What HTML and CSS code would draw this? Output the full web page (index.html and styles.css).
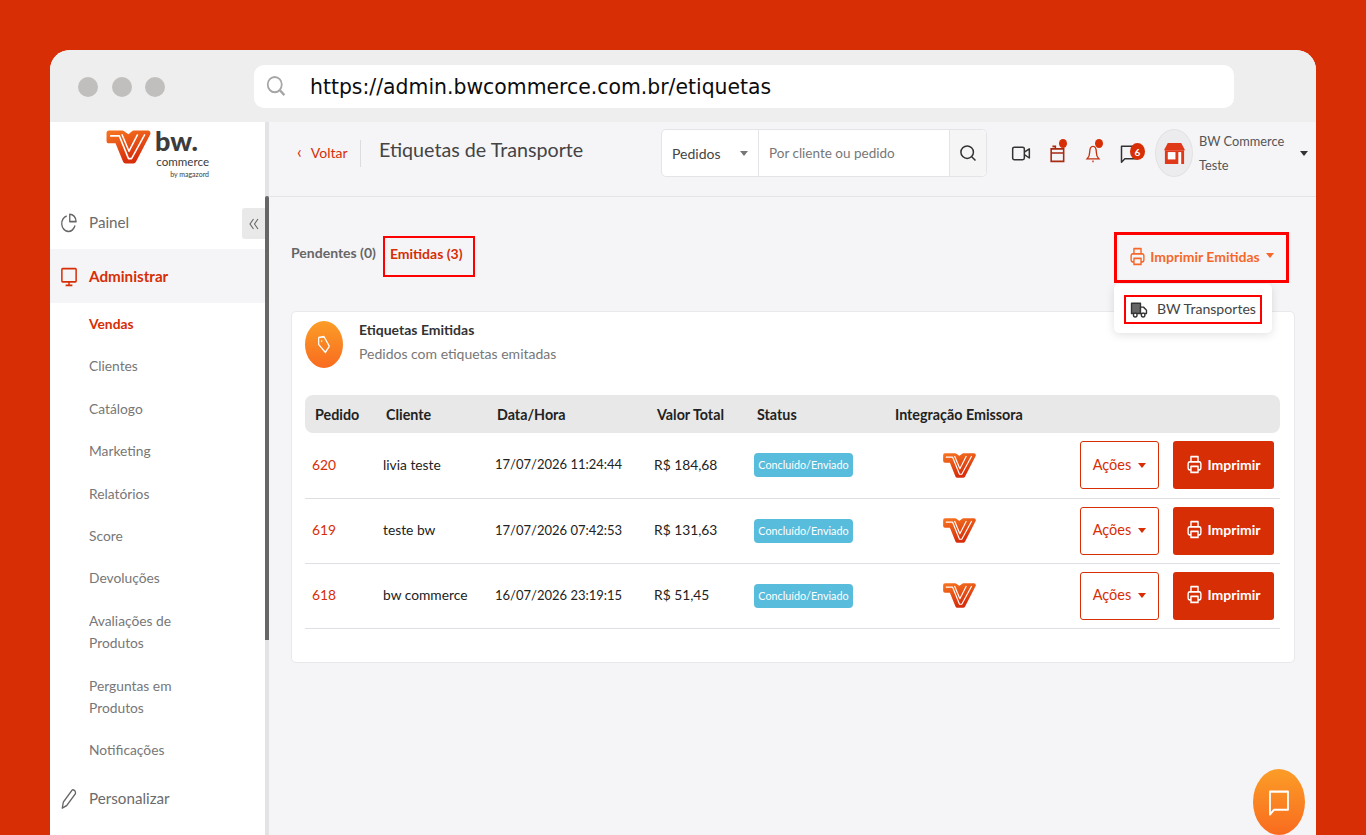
FILE: index.html
```html
<!DOCTYPE html>
<html lang="pt-BR">
<head>
<meta charset="utf-8">
<title>Etiquetas de Transporte</title>
<link rel="stylesheet" href="styles.css">
</head>
<body>
<svg class="defs" width="0" height="0">
  <defs>
    <linearGradient id="lg" x1="0" y1="0" x2="0.4" y2="1"><stop offset="0" stop-color="#f4701f"/><stop offset="1" stop-color="#d8300c"/></linearGradient>
    <symbol id="mark" viewBox="0 0 46 34" preserveAspectRatio="none">
      <path d="M4 4 H17 L23 8 L28 4 H42 L28 30 H20 L12 11 H4 Z" fill="url(#lg)" stroke="url(#lg)" stroke-width="5" stroke-linejoin="round"/>
      <path d="M5 6.5 H14 L23 28 H26 L39 5" fill="none" stroke="#fff" stroke-width="1.5" stroke-linejoin="round"/>
      <path d="M16.5 5 L23.5 21 L32 5" fill="none" stroke="#fff" stroke-width="1.5" stroke-linejoin="round"/>
    </symbol>
    <symbol id="printer" viewBox="0 0 24 24" preserveAspectRatio="none">
      <path d="M7 9V3h10v6M7 18H5a2 2 0 0 1-2-2v-5a2 2 0 0 1 2-2h14a2 2 0 0 1 2 2v5a2 2 0 0 1-2 2h-2M7 14h10v7H7z" fill="none" stroke="currentColor" stroke-width="2" stroke-linejoin="round"/>
    </symbol>
  </defs>
</svg>
<div class="window">
  <div class="chrome">
    <div class="dots"><span class="dot"></span><span class="dot"></span><span class="dot"></span></div>
    <div class="urlbar">
      <svg class="url-icon" viewBox="0 0 24 24" preserveAspectRatio="none"><circle cx="10" cy="10" r="8" fill="none" stroke="#a5a5a5" stroke-width="2"/><path d="M16 16l5 5" stroke="#a5a5a5" stroke-width="2.6"/></svg>
      <span class="url-text">https://admin.bwcommerce.com.br/etiquetas</span>
    </div>
  </div>
  <div class="app">
    <aside class="sidebar">
      <div class="logo">
        <svg class="logo-mark"><use href="#mark"/></svg>
        <div class="logo-text">
          <span class="logo-bw">bw.</span>
          <span class="logo-com">commerce</span>
          <span class="logo-by">by magazord</span>
        </div>
      </div>
      <nav class="nav">
        <div class="nav-top">
          <svg class="nav-icon" viewBox="0 0 24 24" preserveAspectRatio="none"><path d="M9 4.5a9 9 0 1 0 11 11M13 2.5a8.5 8.5 0 0 1 8.5 8.5H13z" fill="none" stroke="#666" stroke-width="1.8" stroke-linejoin="round"/></svg>
          <span>Painel</span>
          <button class="collapse" type="button" aria-label="Recolher"><svg viewBox="0 0 10 12"><path d="M4.5 1L1 6l3.5 5M9 1L5.5 6 9 11" fill="none" stroke="#666" stroke-width="1.1"/></svg></button>
        </div>
        <div class="nav-top nav-active">
          <svg class="nav-icon" viewBox="0 0 24 24" preserveAspectRatio="none"><path d="M3.5 3h17a1 1 0 0 1 1 1v13a1 1 0 0 1-1 1h-17a1 1 0 0 1-1-1V4a1 1 0 0 1 1-1zM12 18v4M7.5 22h9" fill="none" stroke="#d72e05" stroke-width="2"/></svg>
          <span>Administrar</span>
        </div>
        <a class="sub sub-active">Vendas</a>
        <a class="sub">Clientes</a>
        <a class="sub">Catálogo</a>
        <a class="sub">Marketing</a>
        <a class="sub">Relatórios</a>
        <a class="sub">Score</a>
        <a class="sub">Devoluções</a>
        <a class="sub">Avaliações de Produtos</a>
        <a class="sub">Perguntas em Produtos</a>
        <a class="sub">Notificações</a>
        <div class="nav-top nav-last">
          <svg class="nav-icon" viewBox="0 0 24 24" preserveAspectRatio="none"><path d="M3 23l1.5-7L16 2.5c1.5-1.5 5.5 1 4.5 4L9 20z" fill="none" stroke="#666" stroke-width="1.7" stroke-linejoin="round"/></svg>
          <span>Personalizar</span>
        </div>
      </nav>
      <div class="scroll-thumb"></div>
    </aside>
    <main class="main">
      <header class="topbar">
        <a class="back"><span class="back-ch">‹</span>Voltar</a>
        <h1 class="title">Etiquetas de Transporte</h1>
        <div class="search">
          <div class="search-select"><span>Pedidos</span><i class="caret caret-grey"></i></div>
          <div class="search-input">Por cliente ou pedido</div>
          <div class="search-btn"><svg viewBox="0 0 24 24"><circle cx="11" cy="11" r="7.5" fill="none" stroke="#333" stroke-width="1.8"/><path d="M16.5 16.5L21 21" stroke="#333" stroke-width="1.8"/></svg></div>
        </div>
        <div class="top-icons">
          <span class="ti"><svg viewBox="0 0 24 24"><rect x="2" y="5" width="14" height="15" rx="2" fill="none" stroke="#333" stroke-width="1.8"/><path d="M16 11l6-4v11l-6-4" fill="none" stroke="#333" stroke-width="1.8" stroke-linejoin="round"/></svg></span>
          <span class="ti"><svg viewBox="0 0 24 24"><path d="M5 7h15v15H5zM5 12h15M10 7V3M10 4H6.5" fill="none" stroke="#a82a10" stroke-width="1.9"/></svg><i class="ping ping-cal"></i></span>
          <span class="ti"><svg viewBox="0 0 24 24"><path d="M12 4c-3 0-4 3-4 7 0 3-1 6-3 8h14c-2-2-3-5-3-8 0-4-1-7-4-7zM12 21v2" fill="none" stroke="#c3300e" stroke-width="1.6"/></svg><i class="ping ping-bell"></i></span>
          <span class="ti"><svg viewBox="0 0 24 24"><path d="M3 4h18v15H7l-4 4z" fill="none" stroke="#333" stroke-width="1.8" stroke-linejoin="round"/></svg><i class="badge">6</i></span>
        </div>
        <div class="avatar"><svg viewBox="0 0 24 24" preserveAspectRatio="none"><path d="M5 1h14l4 8H1z" fill="#e0391a"/><path d="M2 9h20v15H2z" fill="#e0391a"/><rect x="5" y="11" width="8" height="8" fill="#fff"/><rect x="16" y="11" width="3" height="13" fill="#fff"/></svg></div>
        <div class="user">BW Commerce<br>Teste</div>
        <i class="caret caret-dark"></i>
      </header>
      <section class="content">
        <div class="toolbar">
          <div class="tabs">
            <a class="tab">Pendentes (0)</a>
            <a class="tab tab-on">Emitidas (3)</a>
          </div>
          <div class="print-wrap">
            <button class="print-all" type="button"><svg class="ic"><use href="#printer"/></svg>Imprimir Emitidas<i class="caret caret-or"></i></button>
            <div class="menu">
              <a class="menu-item"><svg viewBox="0 0 24 24" preserveAspectRatio="none"><path d="M2 4h12v13H2z" fill="#666" stroke="#333" stroke-width="1.8" stroke-linejoin="round"/><path d="M14 9h4l4 4v4h-8z" fill="#fff" stroke="#333" stroke-width="1.8" stroke-linejoin="round"/><circle cx="7" cy="19" r="2.4" fill="#fff" stroke="#333" stroke-width="1.8"/><circle cx="17.5" cy="19" r="2.4" fill="#fff" stroke="#333" stroke-width="1.8"/></svg><span class="menu-label">BW Transportes</span></a>
            </div>
          </div>
        </div>
        <div class="card">
          <div class="card-head">
            <div class="card-ic"><svg viewBox="0 0 24 24" preserveAspectRatio="none"><path d="M4 4l8-1 8 11-6 7-10-9z" fill="none" stroke="#fff" stroke-width="1.8" stroke-linejoin="round"/><circle cx="8.5" cy="8" r="1" fill="#fff"/></svg></div>
            <div class="card-text">
              <div class="card-title">Etiquetas Emitidas</div>
              <div class="card-sub">Pedidos com etiquetas emitadas</div>
            </div>
          </div>
          <table class="table">
            <thead>
              <tr><th class="c1">Pedido</th><th class="c2">Cliente</th><th class="c3">Data/Hora</th><th class="c4">Valor Total</th><th class="c5">Status</th><th class="c6">Integração Emissora</th><th class="c7"></th></tr>
            </thead>
            <tbody>
              <tr>
                <td class="order">620</td><td>livia teste</td><td class="date">17/07/2026 11:24:44</td><td>R$ 184,68</td>
                <td class="st"><span class="status">Concluído/Enviado</span></td>
                <td class="mid"><svg class="mark-sm"><use href="#mark"/></svg></td>
                <td class="acts"><div class="act-row"><button class="btn-out" type="button">Ações<i class="caret caret-red"></i></button><button class="btn-fill" type="button"><svg class="ic"><use href="#printer"/></svg>Imprimir</button></div></td>
              </tr>
              <tr>
                <td class="order">619</td><td>teste bw</td><td class="date">17/07/2026 07:42:53</td><td>R$ 131,63</td>
                <td class="st"><span class="status">Concluído/Enviado</span></td>
                <td class="mid"><svg class="mark-sm"><use href="#mark"/></svg></td>
                <td class="acts"><div class="act-row"><button class="btn-out" type="button">Ações<i class="caret caret-red"></i></button><button class="btn-fill" type="button"><svg class="ic"><use href="#printer"/></svg>Imprimir</button></div></td>
              </tr>
              <tr>
                <td class="order">618</td><td>bw commerce</td><td class="date">16/07/2026 23:19:15</td><td>R$ 51,45</td>
                <td class="st"><span class="status">Concluído/Enviado</span></td>
                <td class="mid"><svg class="mark-sm"><use href="#mark"/></svg></td>
                <td class="acts"><div class="act-row"><button class="btn-out" type="button">Ações<i class="caret caret-red"></i></button><button class="btn-fill" type="button"><svg class="ic"><use href="#printer"/></svg>Imprimir</button></div></td>
              </tr>
            </tbody>
          </table>
        </div>
      </section>
      <button class="chat" type="button" aria-label="Chat"><svg viewBox="0 0 24 24" preserveAspectRatio="none"><path d="M3 3h18v15H7l-4 4z" fill="none" stroke="#fff" stroke-width="1.8" stroke-linejoin="round"/></svg></button>
    </main>
  </div>
</div>
</body>
</html>
```

FILE: styles.css
```css
* { box-sizing: border-box; }
html, body { margin: 0; height: 835px; overflow: hidden; }
body { background: #d72e05; padding: 50px 50px 0; font-family: Lato, "Noto Sans", sans-serif; color: #333; font-size: 14px; }
.defs { position: absolute; }
button { font-family: inherit; cursor: pointer; }
a { text-decoration: none; }
.window { height: 785px; border-radius: 20px 20px 0 0; overflow: hidden; background: #f5f5f8; display: flex; flex-direction: column; }
.chrome { height: 72px; flex: none; background: #eee; display: flex; align-items: center; padding: 0 82px 0 28px; }
.dots { display: flex; gap: 13.5px; width: 176px; margin-top: 2px; }
.dot { width: 20px; height: 20px; border-radius: 50%; background: #c0bfbd; }
.urlbar { flex: 1; height: 43px; background: #fff; border-radius: 10px; display: flex; align-items: center; padding-left: 12px; }
.url-icon { width: 21px; height: 23px; margin-right: 23px; }
.url-text { font-family: "DejaVu Sans", sans-serif; font-size: 20.4px; color: #0c0c0c; margin-top: 2px; }
.app { flex: 1; display: flex; min-height: 0; }
.sidebar { width: 219px; flex: none; background: #fff; position: relative; border-right: 4px solid #e3e3e6; }
.scroll-thumb { position: absolute; right: -4px; top: 74px; width: 4px; height: 444px; background: #666; border-radius: 2px 2px 0 0; }
.logo { height: 74px; display: flex; padding: 7px 0 0 55px; }
.logo-mark { width: 47px; height: 36px; flex: none; }
.logo-text { display: flex; flex-direction: column; align-items: flex-end; margin-left: 3px; color: #3c3c3c; line-height: 1; width: 54px; }
.logo-bw { font-weight: 900; font-size: 27px; align-self: flex-start; line-height: 23px; }
.logo-com { font-size: 11.6px; line-height: 13px; margin-top: 3px; }
.logo-by { font-size: 7px; line-height: 10px; margin-top: 1px; }
.nav { display: flex; flex-direction: column; }
.nav-top { height: 53px; display: flex; align-items: center; gap: 11px; padding-left: 10px; font-size: 15.2px; color: #6b6b6b; position: relative; }
.nav-top span { margin-top: -1px; }
.nav-icon { width: 18px; height: 21px; flex: none; }
.nav-active { background: #f5f5f8; color: #d72e05; font-weight: 700; height: 54px; }
.nav-last { height: 53px; margin-top: 0; }
.collapse { position: absolute; right: 0; top: 12px; width: 23px; height: 31px; border: 0; border-radius: 3px 0 0 3px; background: #e9e9e9; padding: 0; display: flex; align-items: center; justify-content: center; }
.collapse svg { width: 10px; height: 12px; }
.sub { display: block; padding: 10px 40px 10px 39px; font-size: 13.8px; line-height: 22.4px; color: #777; }
.sub-active { color: #d72e05; font-weight: 700; }
.main { flex: 1; min-width: 0; position: relative; }
.topbar { height: 75px; border-bottom: 1px solid #e3e3e8; display: flex; align-items: center; padding: 0 0 12px 28px; }
.back { color: #d72e05; font-size: 14px; width: 64px; border-right: 1px solid #dcdcdc; line-height: 24px; padding-bottom: 2px; flex: none; }
.back-ch { font-size: 17px; margin-right: 9px; }
.title { margin: 0 0 0 18px; font-size: 19.7px; font-weight: 400; color: #444; width: 282px; flex: none; position: relative; top: -4px; }
.search { width: 326px; height: 48px; flex: none; display: flex; background: #fff; border: 1px solid #e3e3e8; border-radius: 5px; }
.search-select { width: 97px; display: flex; align-items: center; justify-content: space-between; padding: 0 10px; font-size: 14px; color: #444; border-right: 1px solid #e3e3e8; }
.search-input { flex: 1; display: flex; align-items: center; padding-left: 10px; color: #777; font-size: 13.5px; }
.search-btn { width: 37px; background: #f5f5f6; border-left: 1px solid #e3e3e8; display: flex; align-items: center; justify-content: center; border-radius: 0 5px 5px 0; }
.search-btn svg { width: 20px; height: 20px; }
.caret { display: inline-block; width: 0; height: 0; border-left: 4.5px solid transparent; border-right: 4.5px solid transparent; border-top: 5px solid currentColor; }
.caret-grey { color: #777; }
.caret-dark { color: #333; }
.caret-or { color: #f5682a; margin-left: 6px; position: relative; top: -1px; }
.caret-red { color: #d72e05; margin-left: 7px; position: relative; top: -2px; }
.top-icons { display: flex; margin-left: 24px; gap: 16px; flex: none; }
.ti { width: 20px; height: 22px; position: relative; display: block; }
.ti svg { width: 20px; height: 22px; display: block; }
.ping { position: absolute; width: 8px; height: 9px; border-radius: 50%; background: #d72e05; }
.ping-cal { left: 12px; top: -3px; }
.ping-bell { left: 12px; top: -3px; }
.badge { position: absolute; left: 11px; top: 1px; width: 15px; height: 17px; border-radius: 50%; background: #d72e05; color: #fff; font-size: 10px; font-style: normal; font-weight: 700; display: flex; align-items: center; justify-content: center; }
.avatar { width: 38px; height: 48px; border-radius: 50%; background: #ececee; border: 1px solid #e2e2e2; margin-left: 16px; flex: none; display: flex; align-items: center; justify-content: center; }
.avatar svg { width: 23px; height: 22px; }
.user { margin-left: 6px; width: 101px; flex: none; font-size: 12.8px; line-height: 24px; color: #555; }
.content { padding: 40px 21px 0 22px; position: relative; }
.toolbar { display: flex; justify-content: space-between; align-items: flex-start; height: 74px; }
.tabs { display: flex; align-items: center; margin-top: -1px; }
.tab { font-size: 14px; color: #666; font-weight: 700; height: 41px; line-height: 34px; padding: 0 7px; }
.tab:first-child { padding: 0 7px 0 0; }
.tab-on { color: #d72e05; border: 2px solid #f00; width: 92px; padding: 0 5px; line-height: 31px; }
.print-wrap { position: relative; margin-right: 6px; margin-top: -5px; }
.print-all { width: 175px; height: 51px; background: transparent; border: 3px solid #f00; color: #f5682a; font-weight: 700; font-size: 14px; display: flex; align-items: center; justify-content: center; padding: 0 0 3px; white-space: nowrap; }
.ic { width: 17px; height: 21px; margin-right: 4px; flex: none; }
.menu { position: absolute; left: 0; top: 52px; width: 158px; height: 49px; background: #fff; border-radius: 5px; box-shadow: 0 2px 10px rgba(0,0,0,.12); padding: 11px 10px; z-index: 2; }
.menu-item { display: flex; align-items: center; gap: 9px; height: 29px; width: 138px; border: 2px solid #f00; color: #444; font-size: 14.1px; padding-left: 4px; white-space: nowrap; }
.menu-item svg { width: 18px; height: 19px; flex: none; }
.menu-label { margin-top: -3px; }
.card { background: #fff; border: 1px solid #e9e9ec; border-radius: 5px; height: 352px; padding: 9px 14px 0 13px; }
.card-head { display: flex; gap: 16px; height: 74px; }
.card-text { margin-top: -1px; }
.card-ic { width: 38px; height: 47px; border-radius: 50%; background: linear-gradient(#fb9d27, #f96b1f); display: flex; align-items: center; justify-content: center; }
.card-ic svg { width: 16px; height: 21px; }
.card-title { font-weight: 700; font-size: 14px; line-height: 20px; color: #333; }
.card-sub { font-size: 14px; line-height: 28px; color: #777; }
.table { width: 975px; border-collapse: collapse; table-layout: fixed; }
.table th { background: #e8e8e8; height: 38px; text-align: left; font-size: 14.3px; font-weight: 700; color: #222; padding: 0 0 0 10px; }
.table th:first-child { border-radius: 8px 0 0 8px; }
.table th:last-child { border-radius: 0 8px 8px 0; }
.c1 { width: 71px; }
.c2 { width: 111px; }
.c3 { width: 160px; }
.c4 { width: 100px; }
.c5 { width: 138px; }
.c6 { width: 145px; }
.table td { height: 65px; border-bottom: 1px solid #dfdfe3; font-size: 13.8px; color: #222; padding: 0 0 2px 7px; white-space: nowrap; }
.table td.order { color: #d72e05; }
.table td.date { font-size: 13px; padding-left: 8px; }
.table td.st { padding-bottom: 0; }
.table td.mid { text-align: left; padding: 0 0 0 57px; }
.mark-sm { width: 35px; height: 27px; display: block; }
.status { display: inline-block; background: #58bcdc; color: #fff; font-size: 10.8px; line-height: 24px; height: 24px; width: 99px; text-align: center; border-radius: 4px; }
.table td.acts { padding: 0; }
.act-row { display: flex; gap: 14px; justify-content: flex-end; padding-right: 6px; }
.btn-out { width: 79px; height: 48px; background: #fff; border: 1px solid #d72e05; border-radius: 3px; color: #d72e05; font-size: 14.5px; padding: 0 0 2px; }
.btn-fill { width: 101px; height: 48px; background: #d72e05; border: 0; border-radius: 3px; color: #fff; font-size: 14px; font-weight: 700; display: flex; align-items: center; justify-content: center; padding: 0 0 2px; }
.chat { position: absolute; left: 984px; top: 647px; width: 52px; height: 66px; border: 0; border-radius: 50%; background: linear-gradient(#fb9d27, #f96b1f); display: flex; align-items: center; justify-content: center; padding: 0; }
.chat svg { width: 24px; height: 29px; }
```
